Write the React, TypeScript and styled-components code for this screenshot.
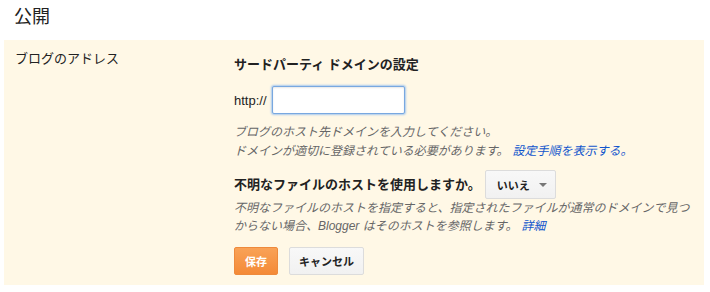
import React from "react";
import styled, { createGlobalStyle } from "styled-components";

const GlobalStyle = createGlobalStyle`
  body {
    margin: 0;
    background: #fff;
    font-family: "Liberation Sans", Arial, "Noto Sans CJK JP", sans-serif;
    font-size: 13px;
    color: #222;
  }
`;

const Page = styled.div`
  width: 710px;
  padding: 0 6px 0 4px;
  box-sizing: border-box;
`;

const Heading = styled.h2`
  margin: 0;
  padding: 5px 0 0 10px;
  height: 40px;
  box-sizing: border-box;
  font-size: 18px;
  font-weight: 400;
  line-height: 24px;
  color: #222;
`;

const Panel = styled.div`
  display: grid;
  grid-template-columns: 219px 1fr;
  background: #fff8e6;
  padding: 10px 11px 11px;
  height: 245px;
  box-sizing: border-box;
`;

const Label = styled.div`
  line-height: 18px;
`;

const Form = styled.div`
  display: flex;
  flex-direction: column;
  padding-top: 6px;
`;

const Title = styled.div`
  font-weight: 700;
  line-height: 18px;
  white-space: nowrap;
`;

const UrlRow = styled.div`
  display: flex;
  align-items: center;
  gap: 4px;
  margin-top: 12px;
`;

const TextInput = styled.input`
  width: 133px;
  height: 28px;
  box-sizing: border-box;
  margin: 0 0 0 1px;
  border: 1px solid #78a8e0;
  border-radius: 2px;
  box-shadow: 0 0 2px 1px #a9c9ee, inset 0 1px 2px rgba(0, 0, 0, 0.1);
  outline: none;
  background: #fff;
`;

const Help = styled.p<{ $top: number; $lh: number }>`
  margin: ${({ $top }) => `${$top}px`} 0 0;
  font-size: 12px;
  font-style: italic;
  color: #666;
  line-height: ${({ $lh }) => `${$lh}px`};
  white-space: nowrap;
`;

const Link = styled.a`
  color: #15c;
  text-decoration: none;
  margin-left: 4px;
`;

const QuestionRow = styled.div`
  display: flex;
  align-items: center;
  gap: 4px;
  margin-top: 9px;
`;

const Select = styled.button`
  display: flex;
  align-items: center;
  gap: 9px;
  height: 29px;
  width: 71px;
  padding: 0 0 0 11px;
  box-sizing: border-box;
  font: inherit;
  font-size: 11px;
  font-weight: 700;
  white-space: nowrap;
  color: #222;
  background: linear-gradient(#f8f8f8, #f1f1f1);
  border: 1px solid #dcdcdc;
  border-radius: 2px;
`;

const Caret = styled.span`
  width: 0;
  height: 0;
  border-left: 4px solid transparent;
  border-right: 4px solid transparent;
  border-top: 4px solid #777;
`;

const Buttons = styled.div`
  display: flex;
  gap: 11px;
  margin-top: 12px;
`;

const Button = styled.button<{ $primary?: boolean }>`
  height: 28px;
  padding: 0 ${({ $primary }) => ($primary ? "10px" : "9px")};
  box-sizing: border-box;
  font: inherit;
  font-size: 11px;
  font-weight: 700;
  white-space: nowrap;
  border-radius: 2px;
  color: ${({ $primary }) => ($primary ? "#fff" : "#222")};
  background: ${({ $primary }) =>
    $primary ? "linear-gradient(#f9a257, #f48a37)" : "linear-gradient(#f8f8f8, #f1f1f1)"};
  border: 1px solid ${({ $primary }) => ($primary ? "#ee8a3c" : "#dcdcdc")};
`;

export default function App() {
  return (
    <Page>
      <GlobalStyle />
      <Heading>公開</Heading>
      <Panel>
        <Label>ブログのアドレス</Label>
        <Form>
          <Title>サードパーティ ドメインの設定</Title>
          <UrlRow>
            <span>http://</span>
            <TextInput type="text" />
          </UrlRow>
          <Help $top={9} $lh={19}>
            ブログのホスト先ドメインを入力してください。
            <br />
            ドメインが適切に登録されている必要があります。
            <Link href="#">設定手順を表示する。</Link>
          </Help>
          <QuestionRow>
            <Title>不明なファイルのホストを使用しますか。</Title>
            <Select>
              いいえ
              <Caret />
            </Select>
          </QuestionRow>
          <Help $top={0} $lh={18}>
            不明なファイルのホストを指定すると、指定されたファイルが通常のドメインで見つ
            <br />
            からない場合、Blogger はそのホストを参照します。
            <Link href="#">詳細</Link>
          </Help>
          <Buttons>
            <Button $primary>保存</Button>
            <Button>キャンセル</Button>
          </Buttons>
        </Form>
      </Panel>
    </Page>
  );
}
